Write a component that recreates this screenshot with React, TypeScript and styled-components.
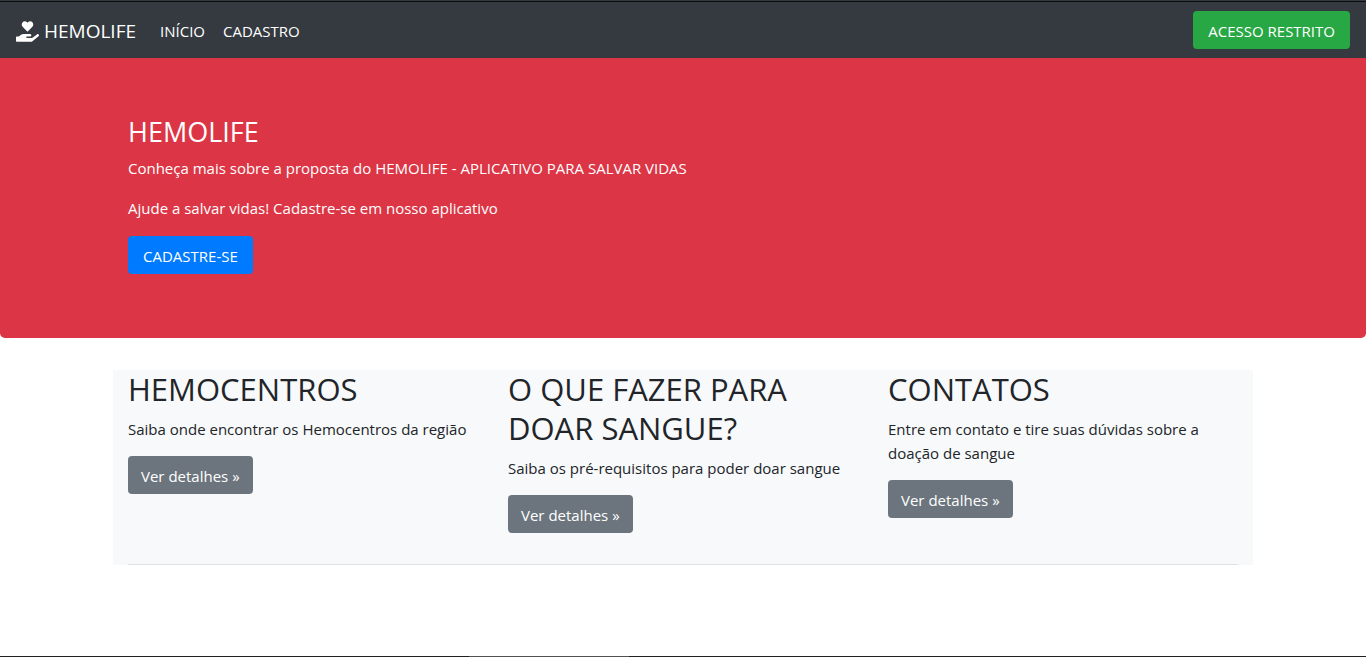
import React from "react";
import styled, { createGlobalStyle } from "styled-components";
import { FaHandHoldingHeart } from "react-icons/fa";

const GlobalStyle = createGlobalStyle`
  *, *::before, *::after { box-sizing: border-box; }
  body {
    margin: 0;
    background: #fff;
    color: #212529;
    font-family: "Segoe UI", "Open Sans", "Noto Sans", sans-serif;
    font-size: 15px;
    line-height: 24px;
  }
`;

const Page = styled.div`
  display: flex;
  flex-direction: column;
  min-height: 100vh;
`;

const TopEdge = styled.div`
  height: 2px;
  background: #343a40;
  border-bottom: 1px solid #0b0c0d;
`;

const Navbar = styled.nav`
  display: flex;
  align-items: center;
  min-height: 56px;
  padding: 8px 16px;
  background: #343a40;
`;

const Brand = styled.a`
  display: flex;
  align-items: center;
  gap: 5px;
  margin-right: 16px;
  padding-top: 2px;
  color: #fff;
  font-size: 19px;
  line-height: 30px;
  text-decoration: none;
`;

const NavList = styled.ul`
  display: flex;
  flex: 1;
  gap: 2px;
  margin: 0;
  padding: 0;
  list-style: none;
`;

const NavLink = styled.a`
  display: block;
  padding: 9px 8px 7px;
  color: #fff;
  text-decoration: none;
`;

const colors = {
  primary: "#007bff",
  secondary: "#6c757d",
  success: "#28a745",
};

const ButtonLink = styled.a<{ $variant: keyof typeof colors }>`
  display: inline-block;
  padding: ${({ $variant }) => ($variant === "secondary" ? "8px 13px 6px" : "8px 15px 6px")};
  border-radius: 4px;
  background: ${({ $variant }) => colors[$variant]};
  color: #fff;
  text-decoration: none;
  white-space: nowrap;
`;

const Jumbotron = styled.header`
  padding: 56px 0 64px;
  border-radius: 0 0 5px 5px;
  background: #dc3545;
  color: #fff;
`;

const Container = styled.div`
  width: 100%;
  max-width: 1140px;
  margin: 0 auto;
  padding: 0 15px;
`;

const HeroTitle = styled.h1`
  margin: 0 0 6px;
  font-size: 27px;
  font-weight: 400;
  line-height: 36px;
`;

const Text = styled.p`
  margin: 0 0 16px;
`;

const Panel = styled(Container)`
  margin-top: 32px;
  background: #f8f9fa;
`;

const Columns = styled.div`
  display: grid;
  grid-template-columns: repeat(3, 1fr);
  gap: 30px;
  padding-bottom: 31px;
  border-bottom: 1px solid #dfe0e1;

  ${Text} {
    margin-bottom: 15px;
  }
`;

const ColumnTitle = styled.h2`
  margin: 0 0 8px;
  font-size: 31px;
  font-weight: 400;
  line-height: 39px;
`;

const BottomEdge = styled.footer`
  height: 1px;
  margin-top: auto;
  background: #231f20;
`;

const BottomEdgeHighlight = styled.div`
  width: 160px;
  height: 1px;
  margin-left: 469px;
  background: #535051;
`;

const topics = [
  { title: "HEMOCENTROS", text: "Saiba onde encontrar os Hemocentros da região" },
  { title: "O QUE FAZER PARA DOAR SANGUE?", text: "Saiba os pré-requisitos para poder doar sangue" },
  { title: "CONTATOS", text: "Entre em contato e tire suas dúvidas sobre a doação de sangue" },
];

export default function App() {
  return (
    <>
      <GlobalStyle />
      <Page>
        <TopEdge />
        <Navbar>
          <Brand href="#">
            <FaHandHoldingHeart size={23} aria-hidden="true" />
            HEMOLIFE
          </Brand>
          <NavList>
            <li><NavLink href="#">INÍCIO</NavLink></li>
            <li><NavLink href="#">CADASTRO</NavLink></li>
          </NavList>
          <ButtonLink href="#" $variant="success">ACESSO RESTRITO</ButtonLink>
        </Navbar>
        <Jumbotron>
          <Container>
            <HeroTitle>HEMOLIFE</HeroTitle>
            <Text>Conheça mais sobre a proposta do HEMOLIFE - APLICATIVO PARA SALVAR VIDAS</Text>
            <Text>Ajude a salvar vidas! Cadastre-se em nosso aplicativo</Text>
            <ButtonLink href="#" $variant="primary">CADASTRE-SE</ButtonLink>
          </Container>
        </Jumbotron>
        <Panel as="main">
          <Columns>
            {topics.map(({ title, text }) => (
              <section key={title}>
                <ColumnTitle>{title}</ColumnTitle>
                <Text>{text}</Text>
                <ButtonLink href="#" $variant="secondary">Ver detalhes »</ButtonLink>
              </section>
            ))}
          </Columns>
        </Panel>
        <BottomEdge>
          <BottomEdgeHighlight />
        </BottomEdge>
      </Page>
    </>
  );
}
